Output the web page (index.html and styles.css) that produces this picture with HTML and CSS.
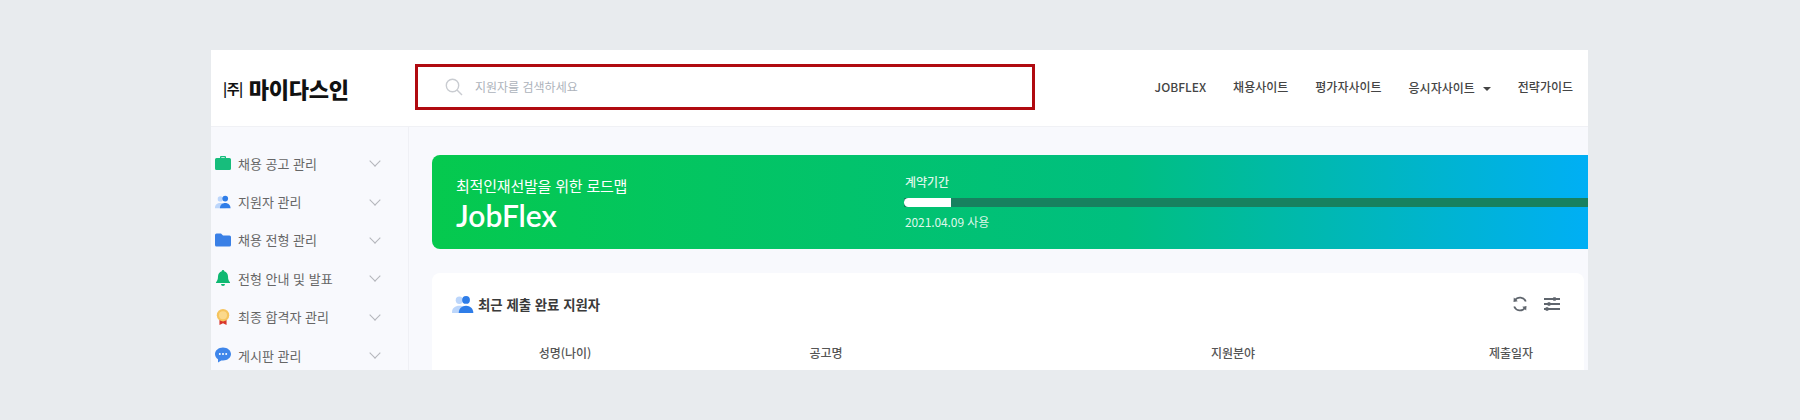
FILE: index.html
```html
<!DOCTYPE html>
<html lang="ko">
<head>
    <meta charset="UTF-8">
    <title>JobFlex</title>
    <link rel="stylesheet" href="styles.css">
</head>
<body>
    <div class="panel">
        <header class="top">
            <div class="logo"><span class="logo-small">|주|</span><span class="logo-name">마이다스인</span></div>
            <div class="search">
                <svg class="search-icon" viewBox="0 0 18 18"><circle cx="7.5" cy="7.5" r="6.2"/><path d="M12 12l5 5"/></svg>
                <span>지원자를 검색하세요</span>
            </div>
            <nav class="nav">
                <a class="nav-latin">JOBFLEX</a>
                <a>채용사이트</a>
                <a>평가자사이트</a>
                <a class="nav-down">응시자사이트<i class="caret"></i></a>
                <a>전략가이드</a>
            </nav>
        </header>
        <div class="body">
            <aside class="side">
                <div class="item">
                    <svg viewBox="0 0 16 14"><path fill="#17bd7c" d="M5 2V1a1 1 0 0 1 1-1h4a1 1 0 0 1 1 1v1h3.500A1.500 1.500 0 0 1 16 3.500V12.500A1.500 1.500 0 0 1 14.500 14H1.500A1.500 1.500 0 0 1 0 12.500V3.500A1.500 1.500 0 0 1 1.500 2zM6.300 1.200V2h3.400v-.8z"/></svg>
                    <span>채용 공고 관리</span><i class="chev"></i>
                </div>
                <div class="item">
                    <svg viewBox="0 0 18 14"><circle cx="6" cy="3.500" r="3" fill="#bcd6fb"/><path fill="#bcd6fb" d="M0 13c0-3 2.500-5 6-5s6 2 6 5v1H0z"/><circle cx="11.500" cy="3.200" r="3.200" fill="#2f7de8"/><path fill="#2f7de8" d="M5.500 14c0-3.500 2.500-6 6-6s6 2.500 6 6z"/></svg>
                    <span>지원자 관리</span><i class="chev"></i>
                </div>
                <div class="item">
                    <svg viewBox="0 0 16 13"><path fill="#3a80e6" d="M0 1.500A1.500 1.500 0 0 1 1.500 0H6l2 2h6.500A1.500 1.500 0 0 1 16 3.500v8a1.500 1.500 0 0 1-1.500 1.500h-13A1.500 1.500 0 0 1 0 11.500z"/></svg>
                    <span>채용 전형 관리</span><i class="chev"></i>
                </div>
                <div class="item">
                    <svg viewBox="0 0 14 16"><path fill="#0fb872" d="M7 0a1.200 1.200 0 0 1 1.200 1.300C10.600 1.900 12 4 12 6.500c0 3 .8 4.500 2 5.700v.8H0v-.8c1.200-1.200 2-2.700 2-5.700C2 4 3.400 1.900 5.800 1.300A1.200 1.200 0 0 1 7 0zM5 14h4a2 2 0 0 1-4 0z"/></svg>
                    <span>전형 안내 및 발표</span><i class="chev"></i>
                </div>
                <div class="item">
                    <svg viewBox="0 0 14 18"><path fill="#d8352c" d="M3 10h8v8l-4-2-4 2z"/><circle cx="7" cy="7" r="7" fill="#f5c45e"/><circle cx="7" cy="7" r="4.500" fill="#fbd98c"/></svg>
                    <span>최종 합격자 관리</span><i class="chev"></i>
                </div>
                <div class="item">
                    <svg viewBox="0 0 16 15"><path fill="#3f86ea" d="M8 0c4.400 0 8 2.900 8 6.500S12.400 13 8 13c-.6 0-1.200 0-1.700-.1L3 15v-3.200C1.200 10.600 0 8.700 0 6.500 0 2.900 3.600 0 8 0z"/><circle cx="4.800" cy="6.500" r="1" fill="#fff"/><circle cx="8" cy="6.500" r="1" fill="#fff"/><circle cx="11.200" cy="6.500" r="1" fill="#fff"/></svg>
                    <span>게시판 관리</span><i class="chev"></i>
                </div>
            </aside>
            <main class="main">
                <section class="banner">
                    <div class="banner-left">
                        <p class="banner-sub">최적인재선발을 위한 로드맵</p>
                        <p class="banner-name">JobFlex</p>
                    </div>
                    <div class="contract">
                        <p class="contract-label">계약기간</p>
                        <div class="bar"><div class="bar-fill"></div></div>
                        <p class="contract-date">2021.04.09 사용</p>
                    </div>
                </section>
                <section class="card">
                    <div class="card-top">
                        <svg class="card-icon" viewBox="0 0 18 14"><circle cx="6" cy="3.500" r="3" fill="#bcd6fb"/><path fill="#bcd6fb" d="M0 13c0-3 2.500-5 6-5s6 2 6 5v1H0z"/><circle cx="11.500" cy="3.200" r="3.200" fill="#2f7de8"/><path fill="#2f7de8" d="M5.500 14c0-3.500 2.500-6 6-6s6 2.500 6 6z"/></svg>
                        <h2>최근 제출 완료 지원자</h2>
                        <div class="tools">
                            <svg viewBox="0 0 16 16"><path d="M13.800 5.500A6.200 6.200 0 0 0 2.900 4.300M2.200 10.500A6.200 6.200 0 0 0 13.100 11.700"/><path class="solid" d="M1.800 1.500l4 3.800-4.300.6zM14.200 14.500l-4-3.800 4.300-.6z"/></svg>
                            <svg viewBox="0 0 16 16"><path d="M0 3h16M0 8h16M0 13h16"/><path class="thick" d="M10.500 1.200v3.600M5 6.200v3.600M3 11.200v3.600"/></svg>
                        </div>
                    </div>
                    <div class="cols">
                        <span>성명(나이)</span>
                        <span>공고명</span>
                        <span>지원분야</span>
                        <span>제출일자</span>
                    </div>
                </section>
            </main>
        </div>
    </div>
</body>
</html>
```

FILE: styles.css
```css
* {
    box-sizing: border-box;
}
html, body {
    margin: 0;
    height: 100%;
}
body {
    background: #e8ebee;
    padding: 50px 212px 50px 211px;
    font-family: "Noto Sans CJK KR", "Noto Sans", sans-serif;
    color: #333;
    overflow: hidden;
}
p, h2 {
    margin: 0;
}
.panel {
    height: 320px;
    background: #f8f9fd;
    display: flex;
    flex-direction: column;
    overflow: hidden;
}
.top {
    height: 77px;
    flex: none;
    padding-bottom: 4px;
    background: #fff;
    border-bottom: 1px solid #f0f1f5;
    display: flex;
    align-items: center;
}
.logo {
    width: 204px;
    margin-top: 4px;
    padding-left: 12px;
    display: flex;
    align-items: center;
    gap: 6px;
    color: #111;
}
.logo-small {
    font-size: 14px;
    font-weight: 700;
    letter-spacing: -0.5px;
}
.logo-name {
    font-size: 22px;
    line-height: 28px;
    font-weight: 900;
    letter-spacing: -0.2px;
}
.search {
    width: 620px;
    height: 46px;
    margin-top: 1px;
    border: 3px solid #b00a10;
    display: flex;
    align-items: center;
    padding-left: 27px;
    gap: 12px;
    font-size: 12px;
    color: #adb3bb;
}
.search-icon {
    width: 18px;
    height: 18px;
    fill: none;
    stroke: #c9ccd1;
    stroke-width: 1.400;
}
.nav {
    margin-left: auto;
    padding-right: 15px;
    display: flex;
    align-items: center;
    gap: 27px;
    font-size: 12px;
    font-weight: 500;
    color: #444;
}
.nav a {
    white-space: nowrap;
}
.nav-latin {
    font-weight: 500;
}
.nav-down {
    margin-top: 2px;
}
.caret {
    display: inline-block;
    margin-left: 8px;
    vertical-align: 2px;
    border: 4px solid transparent;
    border-top-color: #444;
    border-bottom-width: 0;
}
.body {
    flex: 1;
    display: flex;
    min-height: 0;
}
.side {
    width: 198px;
    flex: none;
    padding: 17px 0 0 4px;
    border-right: 1px solid #eff0f5;
}
.item {
    height: 38.400px;
    display: flex;
    align-items: center;
    font-size: 13px;
    color: #666;
}
.item svg {
    width: 16px;
    height: 16px;
    flex: none;
    margin-right: 7px;
}
.chev {
    margin-left: auto;
    margin-right: 29px;
    width: 8px;
    height: 8px;
    border-right: 1.500px solid #b3b6bb;
    border-bottom: 1.500px solid #b3b6bb;
    transform: translateY(-2px) rotate(45deg);
}
.main {
    flex: 1;
    min-width: 0;
    padding: 28px 0 0 23px;
    background: #f8f9fd;
}
.banner {
    height: 94px;
    margin-right: -1px;
    border-radius: 8px 0 0 8px;
    background: linear-gradient(90deg, #05c94e 0%, #00bf80 60%, #00aff5 100%);
    display: flex;
    color: #fff;
}
.banner-left {
    width: 472px;
    padding: 20px 0 0 24px;
}
.banner-sub {
    font-size: 15px;
    line-height: 22px;
    font-weight: 400;
    letter-spacing: -0.2px;
}
.banner-name {
    font-family: Lato, sans-serif;
    font-size: 30px;
    line-height: 36px;
    font-weight: 600;
}
.contract {
    flex: 1;
    padding-top: 17px;
    font-size: 12px;
    color: #dff7ea;
}
.contract-label {
    padding-left: 1px;
    line-height: 20px;
    font-weight: 500;
}
.bar {
    height: 9px;
    margin-top: 6px;
    background: #17815f;
}
.bar-fill {
    width: 47px;
    height: 100%;
    border-radius: 5px 0 0 5px;
    background: #fff;
}
.contract-date {
    margin-top: 5px;
    padding-left: 1px;
    line-height: 20px;
    letter-spacing: -0.1px;
}
.card {
    width: 1152px;
    height: 100px;
    margin: 24px 0 0;
    padding: 0 3px;
    background: #fff;
    border-radius: 8px 8px 0 0;
}
.card-top {
    height: 62px;
    padding: 0 21px 0 17px;
    display: flex;
    align-items: center;
}
.card-icon {
    width: 22px;
    height: 17px;
    margin-right: 4px;
}
.card-top h2 {
    font-size: 13.400px;
    font-weight: 700;
    color: #3a3a3a;
}
.tools {
    margin-left: auto;
    display: flex;
    gap: 16px;
}
.tools svg {
    width: 16px;
    height: 16px;
    fill: none;
    stroke: #5f656d;
    stroke-width: 1.800;
}
.tools .solid {
    fill: #5f656d;
    stroke: none;
}
.tools .thick {
    stroke-width: 2.600;
}
.cols {
    display: grid;
    grid-template-columns: 118px 404px 410px 146px;
    padding: 7px 0 0 71px;
    font-size: 12px;
    line-height: 22px;
    font-weight: 500;
    color: #555;
    text-align: center;
}
```
